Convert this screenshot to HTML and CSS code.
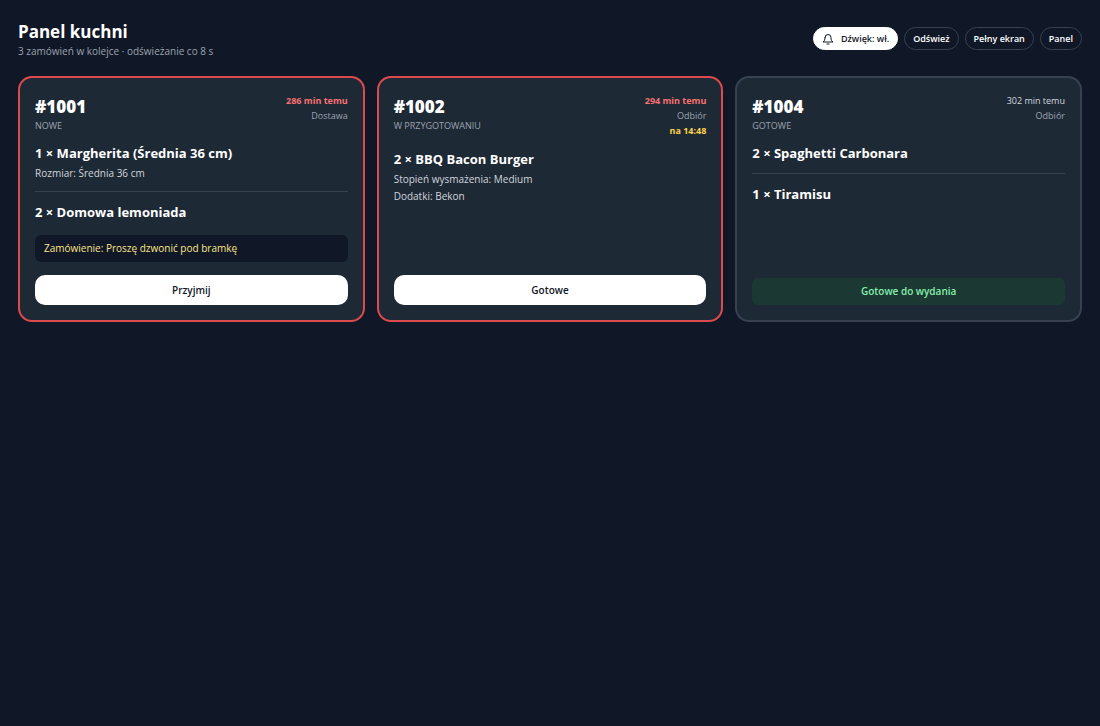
FILE: index.html
```
<!DOCTYPE html>
<html lang="pl">
<head>
    <meta charset="UTF-8">
    <meta name="viewport" content="width=device-width, initial-scale=1">
    <title>Panel kuchni</title>
    <link rel="stylesheet" href="styles.css">
</head>

<body>
    <header class="topbar">
        <div>
            <h1>Panel kuchni</h1>
            <p class="subtitle">3 zamówień w kolejce · odświeżanie co 8 s</p>
        </div>
        <nav class="actions">
            <button type="button" class="pill pill-on">
                <svg class="bell" viewBox="0 0 24 24" fill="none" stroke="currentColor" stroke-width="2" stroke-linecap="round" stroke-linejoin="round" aria-hidden="true">
                    <path d="M6 9a6 6 0 0 1 12 0c0 5 1 7 4 9H2c3-2 4-4 4-9"/>
                    <path d="M10 22h4"/>
                </svg>
                Dźwięk: wł.
            </button>
            <button type="button" class="pill">Odśwież</button>
            <button type="button" class="pill">Pełny ekran</button>
            <a class="pill" href="#">Panel</a>
        </nav>
    </header>

    <main class="orders">
        <article class="card late">
            <div class="card-head">
                <div>
                    <h2>#1001</h2>
                    <p class="status">Nowe</p>
                </div>
                <div class="meta">
                    <p class="age">286 min temu</p>
                    <p>Dostawa</p>
                </div>
            </div>
            <ul class="items">
                <li>
                    <h3>1 × Margherita (Średnia 36 cm)</h3>
                    <p class="option">Rozmiar: Średnia 36 cm</p>
                </li>
                <li>
                    <h3>2 × Domowa lemoniada</h3>
                </li>
            </ul>
            <p class="note">Zamówienie: Proszę dzwonić pod bramkę</p>
            <button type="button" class="next">Przyjmij</button>
        </article>

        <article class="card late">
            <div class="card-head">
                <div>
                    <h2>#1002</h2>
                    <p class="status">W przygotowaniu</p>
                </div>
                <div class="meta">
                    <p class="age">294 min temu</p>
                    <p>Odbiór</p>
                    <p class="due">na 14:48</p>
                </div>
            </div>
            <ul class="items">
                <li>
                    <h3>2 × BBQ Bacon Burger</h3>
                    <p class="option">Stopień wysmażenia: Medium</p>
                    <p class="option">Dodatki: Bekon</p>
                </li>
            </ul>
            <button type="button" class="next">Gotowe</button>
        </article>

        <article class="card">
            <div class="card-head">
                <div>
                    <h2>#1004</h2>
                    <p class="status">Gotowe</p>
                </div>
                <div class="meta">
                    <p class="age">302 min temu</p>
                    <p>Odbiór</p>
                </div>
            </div>
            <ul class="items">
                <li>
                    <h3>2 × Spaghetti Carbonara</h3>
                </li>
                <li>
                    <h3>1 × Tiramisu</h3>
                </li>
            </ul>
            <p class="ready">Gotowe do wydania</p>
        </article>
    </main>
</body>
</html>
```
FILE: styles.css
```
* {
    box-sizing: border-box;
}

body {
    font-family: "Segoe UI", "Open Sans", "Noto Sans", sans-serif;
    background-color: #101726;
    color: #fff;
    margin: 0;
    padding: 19px 18px;
    font-size: 10px;
    line-height: 17px;
}

h1, h2, h3, p, ul {
    margin: 0;
    padding: 0;
}

ul {
    list-style: none;
}

.topbar {
    display: flex;
    flex-wrap: wrap;
    align-items: center;
    justify-content: space-between;
    gap: 12px;
    margin-bottom: 18px;
}

h1 {
    font-size: 17px;
    line-height: 25px;
}

.subtitle {
    color: #9ca3af;
    line-height: 14px;
}

.actions {
    display: flex;
    flex-wrap: wrap;
    gap: 6px;
}

.pill {
    display: flex;
    align-items: center;
    gap: 7px;
    font-family: inherit;
    font-size: 9px;
    font-weight: 600;
    line-height: 13px;
    color: #fff;
    background: transparent;
    border: 1px solid #374151;
    border-radius: 12px;
    padding: 4px 8px;
    text-decoration: none;
    cursor: pointer;
}

.pill-on {
    background: #fff;
    border-color: #fff;
    color: #111827;
}

.bell {
    width: 12px;
    height: 12px;
}

.orders {
    display: grid;
    grid-template-columns: repeat(auto-fill, minmax(280px, 1fr));
    gap: 12px;
}

.card {
    display: flex;
    flex-direction: column;
    background: #1e2936;
    border: 2px solid #374151;
    border-radius: 14px;
    padding: 15px;
}

.late {
    border-color: #dc4a4d;
}

.card-head {
    display: flex;
    justify-content: space-between;
    margin-bottom: 10px;
}

h2 {
    font-size: 17px;
    font-weight: 800;
    line-height: 27px;
}

.status {
    color: #9ca3af;
    font-size: 9px;
    line-height: 12px;
    text-transform: uppercase;
}

.meta {
    color: #9ca3af;
    font-size: 9px;
    line-height: 15px;
    text-align: right;
}

.age {
    color: #d1d5db;
}

.late .age {
    color: #f87171;
    font-weight: 700;
}

.due {
    color: #fcd34d;
    font-weight: 700;
}

.items {
    flex: 1;
}

.items li + li {
    border-top: 1px solid #374151;
    margin-top: 9px;
    padding-top: 9px;
}

h3 {
    font-size: 13px;
    line-height: 22px;
}

h3 + .option {
    margin-top: 1px;
}

.option {
    color: #d1d5db;
}

.note {
    background: #101726;
    color: #fde68a;
    border-radius: 6px;
    margin-top: 12px;
    padding: 5px 9px;
}

.next {
    font-family: inherit;
    font-size: 10px;
    font-weight: 600;
    line-height: 18px;
    color: #111827;
    background: #fff;
    border: none;
    border-radius: 10px;
    margin-top: 13px;
    padding: 6px 12px;
    cursor: pointer;
}

.ready {
    background: #1c3833;
    color: #86efac;
    font-weight: 600;
    text-align: center;
    border-radius: 6px;
    margin-top: 12px;
    padding: 5px 9px;
}
```
